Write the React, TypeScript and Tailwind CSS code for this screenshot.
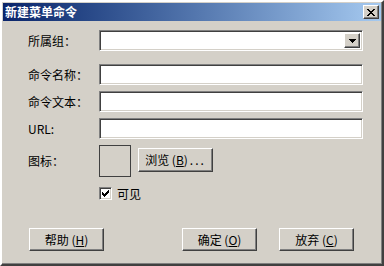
import React from "react";

const sunken =
  "border border-t-[#808080] border-l-[#808080] border-r-white border-b-white shadow-[inset_1px_1px_0_#404040,inset_-1px_-1px_0_#d4d0c8]";
const raised =
  "border border-t-white border-l-white border-r-[#404040] border-b-[#404040] shadow-[inset_-1px_-1px_0_#808080]";

const Button = ({ label, hot, className = "" }: { label: string; hot: string; className?: string }) => (
  <button
    className={`${raised} bg-[#d4d0c8] w-[75px] h-[23px] flex items-center justify-center text-[12px] text-black ${className}`}
  >
    {label}&nbsp;(<span className="underline">{hot}</span>)
  </button>
);

const Row = ({ label, children, className = "" }: { label: string; children: React.ReactNode; className?: string }) => (
  <div className={`flex items-center ${className}`}>
    <span className="w-[71px] text-[12px] text-black">{label}</span>
    {children}
  </div>
);

const App = () => {
  return (
    <div
      className="w-[384px] h-[266px] bg-[#d4d0c8] border-2 border-t-white border-l-white border-r-[#404040] border-b-[#404040] shadow-[inset_-1px_-1px_0_#808080] p-px flex flex-col"
      style={{ fontFamily: '"Noto Sans CJK SC", "Liberation Sans", sans-serif' }}
    >
      {/* Title bar */}
      <div className="h-[18px] bg-gradient-to-r from-[#0a246a] to-[#a6caf0] flex items-center justify-between pl-[2px] pr-[2px]">
        <span className="text-white font-bold text-[12px] leading-none">新建菜单命令</span>
        <button className={`${raised} bg-[#d4d0c8] w-[16px] h-[14px] flex items-center justify-center`}>
          <svg width="8" height="7" viewBox="0 0 8 7" shapeRendering="crispEdges">
            <path d="M0 0h2v1H0zM6 0h2v1H6zM1 1h2v1H1zM5 1h2v1H5zM2 2h4v1H2zM3 3h2v1H3zM2 4h4v1H2zM1 5h2v1H1zM5 5h2v1H5zM0 6h2v1H0zM6 6h2v1H6z" fill="#000" />
          </svg>
        </button>
      </div>

      {/* Form */}
      <div className="flex flex-col pl-[25px] pt-[9px]">
        <Row label="所属组：">
          <div className={`${sunken} bg-white w-[264px] h-[21px] flex justify-end p-[2px]`}>
            <div className={`${raised} bg-[#d4d0c8] w-[16px] h-full flex items-center justify-center`}>
              <svg width="7" height="4" viewBox="0 0 7 4" shapeRendering="crispEdges">
                <path d="M0 0h7v1H0zM1 1h5v1H1zM2 2h3v1H2zM3 3h1v1H3z" fill="#000" />
              </svg>
            </div>
          </div>
        </Row>

        <Row label="命令名称：" className="mt-[13px]">
          <div className={`${sunken} bg-white w-[264px] h-[21px]`} />
        </Row>
        <Row label="命令文本：" className="mt-[6px]">
          <div className={`${sunken} bg-white w-[264px] h-[21px]`} />
        </Row>
        <Row label="URL:" className="mt-[6px]">
          <div className={`${sunken} bg-white w-[264px] h-[21px]`} />
        </Row>

        <Row label="图标：" className="mt-[6px]">
          <div className="flex items-start gap-[7px]">
            <div className="w-[32px] h-[32px] border border-[#404040]" />
            <button
              className={`${raised} bg-[#d4d0c8] w-[75px] h-[24px] mt-[3px] flex items-center justify-center text-[12px] text-black`}
            >
              浏览&nbsp;(<span className="underline">B</span>)<span className="tracking-[2px] ml-[2px]">...</span>
            </button>
          </div>
        </Row>

        <div className="flex items-center gap-[5px] ml-[71px] mt-[10px]">
          <div className={`${sunken} bg-white w-[13px] h-[13px] flex items-center justify-center`}>
            <svg width="7" height="7" viewBox="0 0 7 7" shapeRendering="crispEdges">
              <path d="M6 0h1v3H6zM5 1h1v3H5zM4 2h1v3H4zM3 3h1v3H3zM2 4h1v3H2zM1 3h1v3H1zM0 2h1v3H0z" fill="#000" />
            </svg>
          </div>
          <span className="text-[12px] text-black leading-none">可见</span>
        </div>
      </div>

      {/* Buttons */}
      <div className="flex items-center pl-[26px] mt-[28px]">
        <Button label="帮助" hot="H" />
        <Button label="确定" hot="O" className="ml-[78px]" />
        <Button label="放弃" hot="C" className="ml-[22px]" />
      </div>
    </div>
  );
};

export default App;
